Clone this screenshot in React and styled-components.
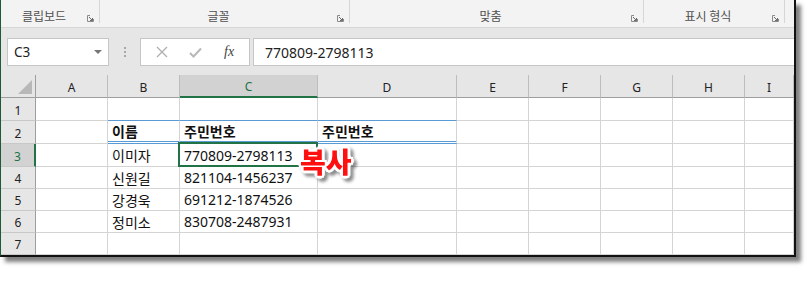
import { Fragment } from "react";
import styled, { createGlobalStyle } from "styled-components";

const GlobalStyle = createGlobalStyle`
  body {
    margin: 0;
    background: #ffffff;
    font-family: "Noto Sans", "Noto Sans CJK KR", sans-serif;
  }
`;

const Page = styled.div`
  width: 808px;
  height: 284px;
  background: #fff;
`;

const Window = styled.div`
  width: 796px;
  height: 257px;
  box-sizing: border-box;
  border-left: 1px solid #1d5a36;
  border-right: 2px solid #111;
  border-bottom: 2px solid #111;
  box-shadow: 5px 5px 4px rgba(0, 0, 0, 0.5);
  overflow: hidden;
  display: flex;
  flex-direction: column;
  background: #fff;
`;

/* ribbon group labels */
const Ribbon = styled.div`
  flex: none;
  height: 28px;
  box-sizing: border-box;
  background: #f3f3f3;
  border-bottom: 1px solid #d6d6d6;
  display: flex;
`;

const Group = styled.div`
  width: ${(p) => p.$w}px;
  flex: ${(p) => (p.$w ? "none" : "1")};
  height: 23px;
  box-sizing: border-box;
  border-right: ${(p) => (p.$w ? "1px solid #d6d6d6" : "none")};
  display: flex;
  align-items: flex-end;
  padding-right: 5px;
`;

const GroupLabel = styled.span`
  flex: 1;
  text-align: center;
  font-family: "Noto Sans CJK KR", sans-serif;
  font-size: 12px;
  line-height: 14px;
  color: #505050;
`;

const LauncherSlot = styled.span`
  display: flex;
  padding-bottom: 1px;
`;

const Launcher = () => (
  <svg width="7" height="7" viewBox="0 0 7 7">
    <path d="M0.5 3 V0.5 H3" stroke="#8a8a8a" fill="none" />
    <path d="M0.5 3 V6.5 H6.5 V4" stroke="#8a8a8a" fill="none" />
    <path d="M2 2 L5.5 5.5 M5.5 3 V5.5 H3" stroke="#6a6a6a" fill="none" />
  </svg>
);

/* formula bar */
const FormulaBar = styled.div`
  flex: none;
  height: 47px;
  box-sizing: border-box;
  background: #e6e6e6;
  padding-top: 10px;
  display: flex;
  align-items: flex-start;
`;

const Box = styled.div`
  height: 28px;
  box-sizing: border-box;
  background: #fff;
  border: 1px solid #c6c6c6;
  display: flex;
  align-items: center;
`;

const NameBox = styled(Box)`
  margin-left: 6px;
  width: 102px;
  padding: 0 6px 0 6px;
  justify-content: space-between;
  font-size: 13.5px;
  color: #222;
`;

const Caret = styled.span`
  width: 0;
  height: 0;
  border-left: 4px solid transparent;
  border-right: 4px solid transparent;
  border-top: 4px solid #777;
`;

const Grip = styled.div`
  width: 31px;
  height: 28px;
  display: flex;
  flex-direction: column;
  align-items: center;
  justify-content: center;
  gap: 2px;
  & > i {
    width: 2px;
    height: 2px;
    background: #a8a8a8;
  }
`;

const ButtonBox = styled(Box)`
  width: 110px;
  justify-content: space-around;
  padding: 0 4px;
`;

const Fx = styled.span`
  font-family: "Liberation Serif", serif;
  font-style: italic;
  font-size: 14px;
  color: #444;
`;

const Input = styled(Box)`
  flex: 1;
  margin-left: 3px;
  border-right: none;
  padding-left: 11px;
  font-size: 14px;
  color: #222;
`;

/* sheet */
const SheetArea = styled.div`
  position: relative;
  flex: none;
`;

const Sheet = styled.div`
  display: grid;
  grid-template-columns: 35px 72px 72px 138px 139px 72px 72px 72px 72px 1fr;
  grid-template-rows: 23px 23px 23px 23px 22px 22px 22px 22px 22px;
`;

const ColHead = styled.div`
  box-sizing: border-box;
  background: ${(p) => (p.$active ? "#d2d2d2" : "#e6e6e6")};
  color: ${(p) => (p.$active ? "#217346" : "#222")};
  border-right: 1px solid #bdbdbd;
  border-bottom: ${(p) => (p.$active ? "2px solid #217346" : "1px solid #9e9e9e")};
  font-size: 12px;
  display: flex;
  align-items: center;
  justify-content: center;
  padding-top: 2px;
`;

const Corner = styled(ColHead)`
  position: relative;
  border-right: 1px solid #9e9e9e;
  &::after {
    content: "";
    position: absolute;
    right: 3px;
    bottom: 3px;
    width: 0;
    height: 0;
    border-left: 14px solid transparent;
    border-bottom: 14px solid #b8b8b8;
  }
`;

const RowHead = styled.div`
  box-sizing: border-box;
  background: ${(p) => (p.$active ? "#d2d2d2" : "#e6e6e6")};
  color: ${(p) => (p.$active ? "#217346" : "#222")};
  border-right: ${(p) => (p.$active ? "2px solid #217346" : "1px solid #9e9e9e")};
  border-bottom: 1px solid #c8c8c8;
  font-size: 12px;
  display: flex;
  align-items: center;
  justify-content: center;
  padding-top: 2px;
`;

const borders = {
  top: "1px solid #5b9bd5",
  head: "3px double #5b9bd5",
};

const Cell = styled.div`
  position: relative;
  box-sizing: border-box;
  border-right: 1px solid #d4d4d4;
  border-bottom: ${(p) => borders[p.$line] || "1px solid #d4d4d4"};
  font-family: "Noto Sans", "Noto Sans CJK KR", sans-serif;
  font-size: 14px;
  font-weight: ${(p) => (p.$bold ? 700 : 400)};
  color: #111;
  padding-left: 4px;
  display: flex;
  align-items: center;
  white-space: nowrap;
  ${(p) =>
    p.$selected &&
    `
    &::after {
      content: "";
      position: absolute;
      left: -2px;
      top: -2px;
      right: -1px;
      bottom: -1px;
      border: 2px solid #217346;
    }
  `}
`;

/* the red "복사" note lies over the sheet */
const Stamp = styled.div`
  position: absolute;
  left: 299px;
  top: 70px;
  z-index: 2;
  font-family: "Noto Sans CJK KR", sans-serif;
  font-size: 28px;
  font-weight: 900;
  line-height: 32px;
  color: #ff1010;
  text-shadow: 2px 0 0 #fff, -2px 0 0 #fff, 0 2px 0 #fff, 0 -2px 0 #fff,
    2px 2px 0 #fff, -2px -2px 0 #fff, 2px -2px 0 #fff, -2px 2px 0 #fff,
    3px 0 1px #fff, -3px 0 1px #fff, 0 3px 1px #fff, 0 -3px 1px #fff;
  filter: drop-shadow(3px 3px 1.5px rgba(0, 0, 0, 0.45));
`;

const columns = ["A", "B", "C", "D", "E", "F", "G", "H", "I"];

const data = {
  2: { B: "이름", C: "주민번호", D: "주민번호" },
  3: { B: "이미자", C: "770809-2798113" },
  4: { B: "신원길", C: "821104-1456237" },
  5: { B: "강경욱", C: "691212-1874526" },
  6: { B: "정미소", C: "830708-2487931" },
};

const groups = [
  { w: 99, label: "클립보드" },
  { w: 250, label: "글꼴" },
  { w: 294, label: "맞춤" },
  { w: 141, label: "표시 형식" },
  { w: 0, label: "" },
];

const lineFor = (row, col) => {
  if (!["B", "C", "D"].includes(col)) return null;
  if (row === 1) return "top";
  if (row === 2) return "head";
  return null;
};

export default function App() {
  // row 8 is only a sliver at the window's bottom edge, so it gets no number
  const rows = [1, 2, 3, 4, 5, 6, 7, 8];
  return (
    <Page>
      <GlobalStyle />
      <Window>
        <Ribbon>
          {groups.map((g, i) => (
            <Group key={i} $w={g.w}>
              <GroupLabel>{g.label}</GroupLabel>
              {g.label && (
                <LauncherSlot>
                  <Launcher />
                </LauncherSlot>
              )}
            </Group>
          ))}
        </Ribbon>

        <FormulaBar>
          <NameBox>
            <span>C3</span>
            <Caret />
          </NameBox>
          <Grip>
            <i />
            <i />
            <i />
          </Grip>
          <ButtonBox>
            <svg width="12" height="12" viewBox="0 0 12 12">
              <path d="M1 1 L11 11 M11 1 L1 11" stroke="#b0b0b0" strokeWidth="1.4" />
            </svg>
            <svg width="13" height="11" viewBox="0 0 13 11">
              <path d="M1 6 L4.5 9.5 L12 1.5" stroke="#b8b8b8" strokeWidth="2" fill="none" />
            </svg>
            <Fx>fx</Fx>
          </ButtonBox>
          <Input>770809-2798113</Input>
        </FormulaBar>

        <SheetArea>
          <Sheet>
            <Corner />
            {columns.map((c) => (
              <ColHead key={c} $active={c === "C"}>
                {c}
              </ColHead>
            ))}
            {rows.map((r) => (
              <Fragment key={r}>
                <RowHead $active={r === 3}>{r < 8 ? r : ""}</RowHead>
                {columns.map((c) => (
                  <Cell
                    key={`${c}${r}`}
                    $bold={r === 2}
                    $line={lineFor(r, c)}
                    $selected={r === 3 && c === "C"}
                  >
                    {data[r]?.[c]}
                  </Cell>
                ))}
              </Fragment>
            ))}
          </Sheet>
          <Stamp>복사</Stamp>
        </SheetArea>
      </Window>
    </Page>
  );
}
